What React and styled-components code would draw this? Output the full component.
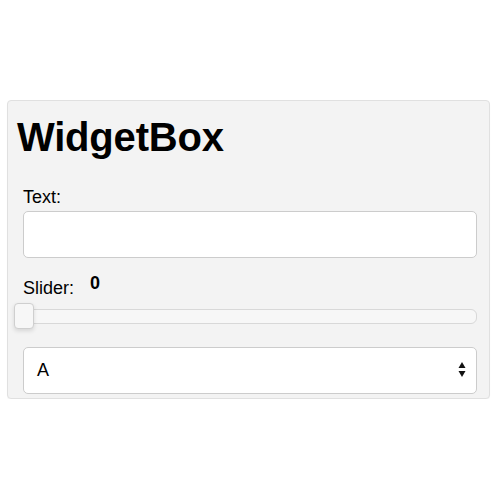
import React from "react";
import styled, { createGlobalStyle } from "styled-components";

const Global = createGlobalStyle`
  html, body { margin: 0; padding: 0; background: #ffffff; }
  body { font-family: "Liberation Sans", Arial, Helvetica, sans-serif; color: #000; }
`;

const Page = styled.div`
  padding: 100px 0 0 7px;
`;

const Panel = styled.div`
  box-sizing: border-box;
  width: 483px;
  height: 299px;
  background: #f3f3f3;
  border: 1px solid #e0e0e0;
  border-radius: 4px;
  padding: 14px 12px 0 15px;
  display: flex;
  flex-direction: column;
  box-shadow: 0 1px 1px rgba(0, 0, 0, 0.04);
`;

const Title = styled.h2`
  margin: 0 0 0 -6px;
  font-size: 40px;
  line-height: 44px;
  font-weight: bold;
  letter-spacing: -0.2px;
`;

const Label = styled.div`
  font-size: 18px;
  line-height: 20px;
  margin-top: ${(p) => p.$top}px;
  display: flex;
  align-items: flex-start;
  gap: 16px;
`;

const Value = styled.span`
  font-weight: bold;
  position: relative;
  top: -5px;
`;

const TextInput = styled.input`
  box-sizing: border-box;
  appearance: none;
  margin: 4px 0 0 0;
  width: 454px;
  height: 47px;
  border: 1px solid #cccccc;
  border-radius: 5px;
  background: #ffffff;
  font-family: inherit;
  font-size: 18px;
  padding: 0 12px;
  outline: none;
`;

const SliderWrap = styled.div`
  position: relative;
  width: 454px;
  height: 26px;
  margin-top: 5px;
  display: flex;
  align-items: center;
`;

const Track = styled.div`
  box-sizing: border-box;
  width: 100%;
  height: 15px;
  background: #f7f7f7;
  border: 1px solid #d8d8d8;
  border-radius: 6px;
`;

const Thumb = styled.div`
  position: absolute;
  box-sizing: border-box;
  left: -9px;
  top: 0;
  width: 20px;
  height: 26px;
  background: #f7f7f7;
  border: 1px solid #cfcfcf;
  border-radius: 4px;
  box-shadow: 0 2px 4px rgba(0, 0, 0, 0.12);
`;

const SelectBox = styled.div`
  position: relative;
  box-sizing: border-box;
  margin-top: 18px;
  width: 454px;
  height: 47px;
  border: 1px solid #cccccc;
  border-radius: 5px;
  background: #ffffff;
  display: flex;
  align-items: center;
  padding: 0 13px;
  font-size: 18px;
`;

const Arrows = styled.svg`
  position: absolute;
  right: 10px;
  top: 14px;
`;

export default function App() {
  return (
    <>
      <Global />
      <Page>
        <Panel>
          <Title>WidgetBox</Title>
          <Label $top={28}>Text:</Label>
          <TextInput type="text" />
          <Label $top={20}>
            Slider: <Value>0</Value>
          </Label>
          <SliderWrap>
            <Track />
            <Thumb />
          </SliderWrap>
          <SelectBox>
            A
            <Arrows width="8" height="16" viewBox="0 0 8 16">
              <path d="M4 0 L7.5 6 L0.5 6 Z" fill="#111" />
              <path d="M0.5 9 L7.5 9 L4 15 Z" fill="#111" />
            </Arrows>
          </SelectBox>
        </Panel>
      </Page>
    </>
  );
}
